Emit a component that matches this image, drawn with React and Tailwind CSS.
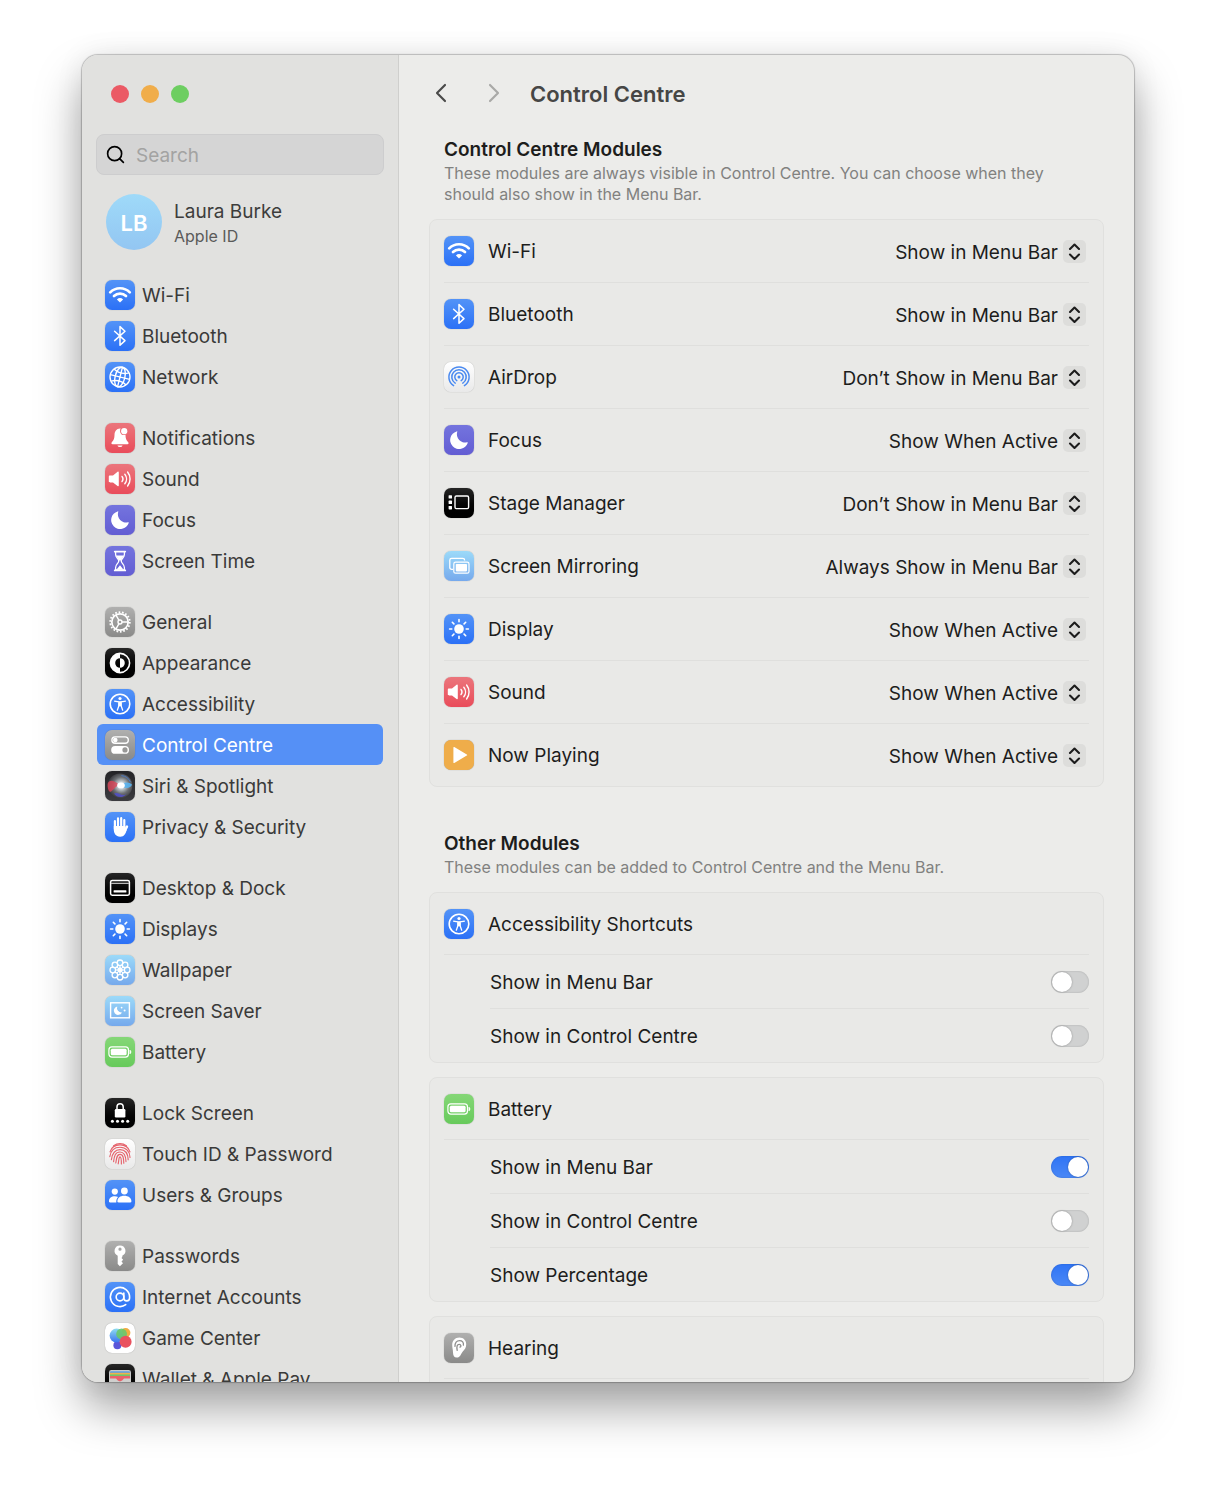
import React, { useState } from 'react'
import { AtSign, Search, ChevronLeft, ChevronRight } from 'lucide-react'

const tiles = {
  blue: 'bg-linear-to-b from-[#5393f7] to-[#2b70f6]',
  red: 'bg-linear-to-b from-[#eb757c] to-[#e94b5a]',
  purple: 'bg-linear-to-b from-[#7474de] to-[#635dd3]',
  gray: 'bg-linear-to-b from-[#b0b0af] to-[#8a8a89]',
  black: 'bg-linear-to-b from-[#262626] to-[#000000]',
  dark: 'bg-linear-to-b from-[#242427] to-[#3c3c40]',
  sky: 'bg-linear-to-b from-[#9cdaf9] to-[#76a9ec]',
  green: 'bg-linear-to-b from-[#85d777] to-[#67ca5b]',
  white: 'bg-linear-to-b from-[#ffffff] to-[#e9e9e9]',
  plain: 'bg-white',
  orange: 'bg-[#efad4a]',
}

// every glyph is drawn in a 30 x 30 box, the size of its tile
const glyphs = {
  wifi: (
    <>
      <g fill="none" stroke="#fff" strokeWidth="2.7">
        <path d="M5.2 12.4A13.6 13.6 0 0 1 24.8 12.4" strokeLinecap="round" />
        <path d="M9 16A8.6 8.6 0 0 1 21 16" strokeLinecap="round" />
      </g>
      <path d="M15 22.6 11.9 19.4A4.5 4.5 0 0 1 18.1 19.4Z" fill="#fff" />
    </>
  ),
  bluetooth: (
    <path d="M9.6 10.2 20 19.6 15 24.2V5.6L20 10.2 9.6 19.6" fill="none" stroke="#fff" strokeWidth="1.5" strokeLinejoin="round" strokeLinecap="round" />
  ),
  globe: (
    <g fill="none" stroke="#fff" strokeWidth="1.4">
      <circle cx="15" cy="15" r="10" />
      <g transform="rotate(14 15 15)">
        <ellipse cx="15" cy="15" rx="4.9" ry="10" />
        <path d="M15 5V25M5 15H25" />
        <path d="M7.2 8.8Q15 13 22.8 8.8M7.2 21.2Q15 17 22.8 21.2" />
      </g>
    </g>
  ),
  bell: (
    <>
      <path d="M15 5.4C11.4 5.6 9.6 8.3 9.5 12 9.4 15.6 8.9 16.8 7 18.9 6 20 6.3 21.2 7.6 21.2H22.4C23.7 21.2 24 20 23 18.9 21.1 16.8 20.6 15.6 20.5 12A4.6 4.6 0 0 1 15.6 5.4Z" fill="#fff" />
      <circle cx="19.2" cy="8.2" r="3.9" fill="#eb6f77" />
      <circle cx="19.2" cy="8.2" r="3.1" fill="#fff" />
      <path d="M12.4 22.4H17.6A2.7 2.3 0 0 1 12.4 22.4Z" fill="#fff" />
    </>
  ),
  sound: (
    <>
      <path d="M5 11.6H8L12.6 7.8C13.2 7.3 13.8 7.6 13.8 8.4V21.4C13.8 22.2 13.2 22.5 12.6 22L8 18.4H5C4.2 18.4 3.8 18 3.8 17.2V12.8C3.8 12 4.2 11.6 5 11.6Z" fill="#fff" />
      <g fill="none" stroke="#fff" strokeWidth="1.4" strokeLinecap="round">
        <path d="M17 12.4A4.2 4.2 0 0 1 17 17.6" />
        <path d="M19.8 10.2A7.6 7.6 0 0 1 19.8 19.8" />
        <path d="M22.6 8A11.2 11.2 0 0 1 22.6 22" />
      </g>
    </>
  ),
  moon: <path d="M12.6 6.4A9 9 0 1 0 23.7 17.9C23.9 17.3 23.4 17 22.9 17.3A8.2 8.2 0 0 1 13.2 7.1C13.4 6.5 13.2 6.1 12.6 6.4Z" fill="#fff" />,
  hourglass: (
    <>
      <path d="M9.7 5.6H20.3M9.7 24.4H20.3" stroke="#fff" strokeWidth="1.7" strokeLinecap="round" />
      <path d="M10.6 6V8.6C10.6 11.4 13.8 13 13.8 15 13.8 17 10.6 18.6 10.6 21.4V24H19.4V21.4C19.4 18.6 16.2 17 16.2 15 16.2 13 19.4 11.4 19.4 8.6V6" fill="none" stroke="#fff" strokeWidth="1.3" />
      <path d="M11 9.6H19C18.2 11.6 16.4 12.8 16 14.6H14C13.6 12.8 11.8 11.6 11 9.6ZM11.6 23.6 15 19.2 18.4 23.6Z" fill="#fff" />
    </>
  ),
  gear: (
    <g fill="none" stroke="#fff">
      <circle cx="15" cy="15" r="9.8" strokeWidth="1.8" strokeDasharray="1.7 1.72" />
      <circle cx="15" cy="15" r="8.2" strokeWidth="1.7" />
      <circle cx="15" cy="15" r="2" strokeWidth="1.4" />
      <path d="M17 15H23M14 13.3 11 8.1M14 16.7 11 21.9" strokeWidth="1.4" />
    </g>
  ),
  appearance: (
    <>
      <circle cx="15" cy="15" r="9.6" fill="none" stroke="#fff" strokeWidth="1.6" />
      <path d="M15 5.4A9.6 9.6 0 0 0 15 24.6V19.8A4.8 4.8 0 0 1 15 10.2ZM15 10.2A4.8 4.8 0 0 1 15 19.8Z" fill="#fff" />
    </>
  ),
  accessibility: (
    <>
      <circle cx="15" cy="15" r="9.8" fill="none" stroke="#fff" strokeWidth="1.6" />
      <circle cx="15" cy="9.5" r="1.6" fill="#fff" />
      <path d="M9.6 12.2C11.4 12.7 13 12.9 15 12.9S18.6 12.7 20.4 12.2M12.3 21.2 13.8 17V13.2H16.2V17L17.7 21.2" fill="none" stroke="#fff" strokeWidth="1.3" strokeLinecap="round" strokeLinejoin="round" />
      <path d="M13.6 13H16.4V17.2H13.6Z" fill="#fff" />
    </>
  ),
  switches: (
    <>
      <rect x="6.9" y="6.9" width="16.4" height="6.4" rx="3.2" fill="none" stroke="#fff" strokeWidth="1.4" />
      <circle cx="10.3" cy="10.1" r="2.3" fill="#fff" />
      <rect x="6.2" y="16" width="17.8" height="7.8" rx="3.9" fill="#fff" />
      <circle cx="20" cy="19.9" r="2.6" fill="#989897" />
    </>
  ),
  siri: (
    <>
      <defs>
        <radialGradient id="siriOrb" cx="0.55" cy="0.48" r="0.55">
          <stop offset="0" stopColor="#ffffff" />
          <stop offset="0.25" stopColor="#c9d3d8" />
          <stop offset="0.6" stopColor="#6d7074" />
          <stop offset="1" stopColor="#343438" />
        </radialGradient>
      </defs>
      <circle cx="15" cy="14.8" r="12.4" fill="url(#siriOrb)" />
      <path d="M2.6 13C4 8.6 8 8.6 14.5 14 9 16 7 21.4 4.8 20.8 3 19.4 2.4 16 2.6 13Z" fill="#dc4557" opacity="0.8" />
      <path d="M14.5 14.6C19 10.6 24 10.6 27 13.6 26 17.6 20 18.4 14.5 14.6Z" fill="#58b2ef" opacity="0.9" />
      <path d="M9 22.6C13 20 17 26.4 21.8 23 18 27 12 27.4 9 22.6Z" fill="#514fc9" opacity="0.85" />
      <path d="M16.4 4.6A11 11 0 0 1 25.4 11" fill="none" stroke="#4d7cc4" strokeWidth="1" />
      <ellipse cx="16" cy="14.4" rx="3.8" ry="2.8" fill="#fff" />
    </>
  ),
  hand: (
    <>
      <g stroke="#fff" strokeWidth="2.2" strokeLinecap="round" fill="none">
        <path d="M9.9 9.2V17M13 6.4V16M16.2 6.2V16M19.3 8.2V17" />
        <path d="M22 14.6 19.4 19.6" strokeWidth="2.4" />
      </g>
      <path d="M8.8 14H20.4V17.4L21.8 17.8C20.8 21.4 19.4 24.8 15.2 24.8 10.6 24.8 8.8 21.2 8.8 17.6Z" fill="#fff" />
    </>
  ),
  dock: (
    <>
      <rect x="5.6" y="7.4" width="18.8" height="14.8" rx="1.6" fill="none" stroke="#fff" strokeWidth="1.5" />
      <path d="M6 10.4H24" stroke="#bbb" strokeWidth="1.2" />
      <rect x="8.6" y="17.2" width="12.8" height="2.4" rx="0.6" fill="#fff" />
    </>
  ),
  sun: (
    <>
      <circle cx="15" cy="15" r="4.8" fill="#fff" />
      <path d="M15 5.6V7.8M15 22.2V24.4M5.6 15H7.8M22.2 15H24.4M8.3 8.3 9.9 9.9M20.1 20.1 21.7 21.7M8.3 21.7 9.9 20.1M20.1 9.9 21.7 8.3" stroke="#fff" strokeWidth="1.6" strokeLinecap="round" />
    </>
  ),
  flower: (
    <g fill="none" stroke="#fff" strokeWidth="1.3">
      <circle cx="15" cy="7.8" r="2.8" />
      <circle cx="20.1" cy="9.9" r="2.8" />
      <circle cx="22.2" cy="15" r="2.8" />
      <circle cx="20.1" cy="20.1" r="2.8" />
      <circle cx="15" cy="22.2" r="2.8" />
      <circle cx="9.9" cy="20.1" r="2.8" />
      <circle cx="7.8" cy="15" r="2.8" />
      <circle cx="9.9" cy="9.9" r="2.8" />
      <circle cx="15" cy="15" r="2" fill="#fff" />
      <path d="M15 10.6V19.4M10.6 15H19.4M11.9 11.9 18.1 18.1M11.9 18.1 18.1 11.9" strokeWidth="1" />
    </g>
  ),
  saver: (
    <>
      <rect x="5.6" y="6.8" width="18.8" height="15" fill="none" stroke="#fff" strokeWidth="1.4" />
      <path d="M12.2 10.4A4.3 4.3 0 1 0 17 16.4 4.6 4.6 0 0 1 12.2 10.4Z" fill="#fff" />
      <circle cx="16.6" cy="11.6" r="0.9" fill="#fff" />
      <circle cx="19.6" cy="14.6" r="1" fill="#fff" />
    </>
  ),
  battery: (
    <>
      <rect x="3.9" y="9.9" width="19.6" height="10.2" rx="3" fill="none" stroke="#fff" strokeWidth="1.2" />
      <rect x="5.8" y="11.7" width="15.8" height="6.6" rx="1.5" fill="#fff" />
      <path d="M25 13.2A2.4 2.4 0 0 1 25 16.8Z" fill="#fff" stroke="#fff" strokeWidth="0.8" />
    </>
  ),
  lock: (
    <>
      <rect x="9.8" y="11" width="10.6" height="8.4" rx="1.2" fill="#fff" />
      <path d="M12 11.6V8.8A3.1 3.1 0 0 1 18.2 8.8V11.6" fill="none" stroke="#fff" strokeWidth="1.5" />
      <g fill="#fff">
        <circle cx="7.4" cy="23.2" r="1.5" />
        <circle cx="12.5" cy="23.2" r="1.5" />
        <circle cx="17.6" cy="23.2" r="1.5" />
        <circle cx="22.7" cy="23.2" r="1.5" />
      </g>
    </>
  ),
  touch: (
    <g fill="none" stroke="#e5636c" strokeWidth="1.15" strokeLinecap="round">
      <path d="M8.6 6.8A10.6 10.6 0 0 1 21.4 6.8" />
      <path d="M5 12.8C6.4 8.4 10.4 5.8 15 5.8S23.6 8.4 25 12.8" />
      <path d="M4.8 17.6C5.6 12 9 8.2 15 8.2S25 12.6 25 18.4" />
      <path d="M6.4 20.6C7.2 14.4 9.4 10.6 15 10.6S23 14.8 23.2 20.8" />
      <path d="M8.6 22.6C9.2 17 10.2 13 15 13S20.8 17.4 21 22.6" />
      <path d="M10.8 24C11.6 19.4 11.6 15.4 15 15.4S18.6 19.4 18.8 24.2" />
      <path d="M13.2 24.8C14 21.6 13.6 17.8 15 17.8S16.4 21.4 16.4 25" />
    </g>
  ),
  users: (
    <g fill="#fff">
      <circle cx="9.8" cy="11.6" r="3.1" />
      <circle cx="19.4" cy="11" r="3.4" />
      <path d="M4 21.2C4 17.9 6.4 16.2 9.8 16.2 11 16.2 12.2 16.5 13.1 17 11.8 18.2 11.2 19.8 11.3 22.4H5C4.3 22.4 4 22 4 21.2Z" />
      <path d="M12.4 21.2C12.4 18 15.2 15.8 19.2 15.8S26.4 18 26.4 21.2C26.4 22 26.1 22.4 25.3 22.4H13.6C12.7 22.4 12.4 22 12.4 21.2Z" />
    </g>
  ),
  key: (
    <path
      d="M15 4.4A5.4 5.4 0 0 0 12.7 14.7V22.9L14.9 25.2 18 22.2 16.5 20.5 18.2 18.7 16.5 16.9 17.3 16V14.7A5.4 5.4 0 0 0 15 4.4ZM15 6.6A1.6 1.6 0 1 1 15 9.8 1.6 1.6 0 0 1 15 6.6Z"
      fill="#fff"
      fillRule="evenodd"
    />
  ),
  at: <AtSign x="3.5" y="3.5" width="23" height="23" color="#fff" strokeWidth={1.7} />,
  game: (
    <>
      <defs>
        <linearGradient id="gameBlue" x1="0" y1="0" x2="0" y2="1">
          <stop offset="0" stopColor="#8fdcf0" />
          <stop offset="1" stopColor="#3a72f0" />
        </linearGradient>
      </defs>
      <circle cx="20.6" cy="9.8" r="4.8" fill="#f0ad42" />
      <circle cx="12.4" cy="22.2" r="4" fill="#5a55d8" />
      <circle cx="11.6" cy="12.6" r="7" fill="url(#gameBlue)" />
      <circle cx="16.6" cy="11" r="5.4" fill="#69c86a" opacity="0.9" />
      <circle cx="20.6" cy="18.8" r="6" fill="#e9515e" />
    </>
  ),
  wallet: (
    <>
      <rect x="4" y="6" width="22" height="20" rx="2.4" fill="#c9c9c9" />
      <rect x="5" y="7.2" width="20" height="5" rx="1" fill="#5f9fe0" />
      <rect x="5" y="8.8" width="20" height="5" fill="#efb14c" />
      <rect x="5" y="10.4" width="20" height="5" fill="#6fc76a" />
      <path d="M5 12H25V20H5Z" fill="#e9616a" />
      <path d="M4 14.4H10.5C12 14.4 12.4 17.2 15 17.2S18 14.4 19.5 14.4H26V26H4Z" fill="#cfcfcd" />
    </>
  ),
  airdrop: (
    <g fill="none" stroke="#4a8af0" strokeWidth="1.5" strokeLinecap="round">
      <circle cx="15" cy="15" r="1.5" fill="#4a8af0" stroke="none" />
      <path d="M12.8 18.6A4.2 4.2 0 1 1 17.2 18.6" />
      <path d="M11.2 21.1A7.2 7.2 0 1 1 18.8 21.1" />
      <path d="M9.6 23.6A10.1 10.1 0 1 1 20.4 23.6" />
    </g>
  ),
  stage: (
    <>
      <g fill="#fff">
        <rect x="4.6" y="7.2" width="3.4" height="3.4" rx="0.6" />
        <rect x="4.6" y="12.6" width="3.4" height="3.4" rx="0.6" />
        <rect x="4.6" y="18" width="3.4" height="3.4" rx="0.6" />
      </g>
      <rect x="11" y="8" width="13.6" height="12.6" rx="1.4" fill="none" stroke="#fff" strokeWidth="1.4" />
    </>
  ),
  mirror: (
    <>
      <path d="M9 18.4H7.6C6.5 18.4 5.8 17.7 5.8 16.6V9.2C5.8 8.1 6.5 7.4 7.6 7.4H18.8C19.9 7.4 20.6 8.1 20.6 9.2V9.6" fill="none" stroke="#fff" strokeWidth="1.3" />
      <rect x="9.8" y="11.2" width="15.2" height="11" rx="1.8" fill="none" stroke="#fff" strokeWidth="1.2" />
      <rect x="11.8" y="13" width="11.2" height="7.4" rx="0.8" fill="#fff" />
    </>
  ),
  play: <path d="M9.4 7.6V22.4C9.4 23 9.8 23.2 10.3 22.9L22.8 15.6C23.3 15.3 23.3 14.7 22.8 14.4L10.3 7.1C9.8 6.8 9.4 7 9.4 7.6Z" fill="#fff" />,
  ear: (
    <>
      <path d="M15.4 4.6C11 4.6 8.2 7.8 8.2 12 8.2 15 9 16.6 9 19.6 9 22.6 10.2 24.6 12.6 24.6 16.6 24.6 16.6 20.8 18.8 18.4 20.6 16.4 22.2 14.6 22.2 11.4 22.2 7.4 19.4 4.6 15.4 4.6Z" fill="#fff" />
      <path d="M11 13.4C10.8 9.6 12.6 7.6 15.6 7.6 18.4 7.6 19.8 9.4 19.4 12.2M13.2 17.4C12.4 13 13.2 11.4 15.2 11.4 17.2 11.4 17.4 13.6 16 14.2" fill="none" stroke="#8f8f8e" strokeWidth="1.3" strokeLinecap="round" />
    </>
  ),
}

const sidebarGroups = [
  [
    { label: 'Wi-Fi', glyph: 'wifi', tile: 'blue' },
    { label: 'Bluetooth', glyph: 'bluetooth', tile: 'blue' },
    { label: 'Network', glyph: 'globe', tile: 'blue' },
  ],
  [
    { label: 'Notifications', glyph: 'bell', tile: 'red' },
    { label: 'Sound', glyph: 'sound', tile: 'red' },
    { label: 'Focus', glyph: 'moon', tile: 'purple' },
    { label: 'Screen Time', glyph: 'hourglass', tile: 'purple' },
  ],
  [
    { label: 'General', glyph: 'gear', tile: 'gray' },
    { label: 'Appearance', glyph: 'appearance', tile: 'black' },
    { label: 'Accessibility', glyph: 'accessibility', tile: 'blue' },
    { label: 'Control Centre', glyph: 'switches', tile: 'gray' },
    { label: 'Siri & Spotlight', glyph: 'siri', tile: 'dark' },
    { label: 'Privacy & Security', glyph: 'hand', tile: 'blue' },
  ],
  [
    { label: 'Desktop & Dock', glyph: 'dock', tile: 'black' },
    { label: 'Displays', glyph: 'sun', tile: 'blue' },
    { label: 'Wallpaper', glyph: 'flower', tile: 'sky' },
    { label: 'Screen Saver', glyph: 'saver', tile: 'sky' },
    { label: 'Battery', glyph: 'battery', tile: 'green' },
  ],
  [
    { label: 'Lock Screen', glyph: 'lock', tile: 'black' },
    { label: 'Touch ID & Password', glyph: 'touch', tile: 'white' },
    { label: 'Users & Groups', glyph: 'users', tile: 'blue' },
  ],
  [
    { label: 'Passwords', glyph: 'key', tile: 'gray' },
    { label: 'Internet Accounts', glyph: 'at', tile: 'blue' },
    { label: 'Game Center', glyph: 'game', tile: 'plain' },
    { label: 'Wallet & Apple Pay', glyph: 'wallet', tile: 'black' },
  ],
]

const menuBar = ['Show in Menu Bar', 'Don’t Show in Menu Bar']
const whenActive = ['Always Show in Menu Bar', 'Show When Active', 'Don’t Show in Menu Bar']

const modules = [
  { label: 'Wi-Fi', glyph: 'wifi', tile: 'blue', options: menuBar, value: 'Show in Menu Bar' },
  { label: 'Bluetooth', glyph: 'bluetooth', tile: 'blue', options: menuBar, value: 'Show in Menu Bar' },
  { label: 'AirDrop', glyph: 'airdrop', tile: 'white', options: menuBar, value: 'Don’t Show in Menu Bar' },
  { label: 'Focus', glyph: 'moon', tile: 'purple', options: whenActive, value: 'Show When Active' },
  { label: 'Stage Manager', glyph: 'stage', tile: 'black', options: menuBar, value: 'Don’t Show in Menu Bar' },
  { label: 'Screen Mirroring', glyph: 'mirror', tile: 'sky', options: whenActive, value: 'Always Show in Menu Bar' },
  { label: 'Display', glyph: 'sun', tile: 'blue', options: whenActive, value: 'Show When Active' },
  { label: 'Sound', glyph: 'sound', tile: 'red', options: whenActive, value: 'Show When Active' },
  { label: 'Now Playing', glyph: 'play', tile: 'orange', options: whenActive, value: 'Show When Active' },
]

const otherModules = [
  {
    label: 'Accessibility Shortcuts',
    glyph: 'accessibility',
    tile: 'blue',
    toggles: [['Show in Menu Bar', false], ['Show in Control Centre', false]],
  },
  {
    label: 'Battery',
    glyph: 'battery',
    tile: 'green',
    toggles: [['Show in Menu Bar', true], ['Show in Control Centre', false], ['Show Percentage', true]],
  },
  { label: 'Hearing', glyph: 'ear', tile: 'gray', toggles: [] },
]

const Tile = ({ glyph, tile }) => (
  <span className={`block size-[30px] shrink-0 overflow-hidden rounded-[7px] shadow-[0_0_1px_rgba(0,0,0,0.35)] ${tiles[tile]}`}>
    <svg viewBox="0 0 30 30" className="size-full" aria-hidden="true">
      {glyphs[glyph]}
    </svg>
  </span>
)

const Sidebar = () => {
  const [active, setActive] = useState('Control Centre')

  return (
    <aside className="flex w-[317px] shrink-0 flex-col overflow-y-auto border-r border-[#cfcfcd] bg-[#e1e1df] px-3.5 pt-[30px] [scrollbar-width:none]">
      <div className="flex gap-3 pl-[15px]">
        <button aria-label="Close" className="size-[18px] rounded-full bg-[#eb5a65]" />
        <button aria-label="Minimise" className="size-[18px] rounded-full bg-[#f0ad4a]" />
        <button aria-label="Zoom" className="size-[18px] rounded-full bg-[#6dce61]" />
      </div>

      <label className="mt-[31px] flex h-[41px] shrink-0 items-center gap-2.5 rounded-lg border border-[#cdcdce] bg-[#d5d5d5] px-2">
        <Search className="size-[21px] shrink-0 text-black" strokeWidth={1.9} aria-hidden="true" />
        <input
          type="search"
          aria-label="Search"
          placeholder="Search"
          className="w-full min-w-0 bg-transparent pt-[3px] text-[19px] outline-none placeholder:text-[#a3a3a2]"
        />
      </label>

      <a href="#apple-id" className="mt-[19px] flex shrink-0 items-center gap-3 pl-2.5">
        <span className="flex size-14 items-center justify-center rounded-full bg-linear-to-b from-[#9fdaf9] to-[#93c6f2] pt-0.5 text-[22px] font-semibold text-white">
          LB
        </span>
        <span className="flex flex-col pt-[3px] text-[#3d3d3c]">
          <span className="text-[19px] leading-6">Laura Burke</span>
          <span className="text-base leading-6 text-[#5a5a59]">Apple ID</span>
        </span>
      </a>

      <nav className="mt-6 flex flex-col gap-5 px-px">
        {sidebarGroups.map((group, index) => (
          <ul key={index}>
            {group.map((item) => (
              <li key={item.label}>
                <a
                  href={`#${item.glyph}`}
                  onClick={() => setActive(item.label)}
                  className={`flex h-[41px] items-center gap-[7px] rounded-md pl-2 text-[19px] ${
                    active === item.label ? 'bg-[#5590f6] text-white' : 'text-[#3a3a39]'
                  }`}
                >
                  <Tile glyph={item.glyph} tile={item.tile} />
                  <span className="pt-[3px]">{item.label}</span>
                </a>
              </li>
            ))}
          </ul>
        ))}
      </nav>
    </aside>
  )
}

const ModuleRow = ({ label, glyph, tile, options, value }) => {
  const id = `module-${label}`

  return (
    <div className="flex h-[63px] items-center border-b border-[#dfdfdd] last:h-[62px] last:border-b-0">
      <Tile glyph={glyph} tile={tile} />
      <label htmlFor={id} className="ml-3.5 grow pt-[3px]">
        {label}
      </label>
      <div className="relative mr-[3px]">
        <select
          id={id}
          defaultValue={value}
          className="field-sizing-content block h-[31px] cursor-default appearance-none bg-transparent pt-[3px] pr-7 [text-align-last:right] outline-none"
        >
          {options.map((option) => (
            <option key={option}>{option}</option>
          ))}
        </select>
        <span className="pointer-events-none absolute top-1 right-0 size-[23px] rounded-[5px] bg-[#dddddb]">
          <svg viewBox="0 0 23 23" className="size-full" aria-hidden="true">
            <path d="M7 9 11.5 4.6 16 9M7 14.6 11.5 19 16 14.6" fill="none" stroke="#1c1c1c" strokeWidth="2.1" strokeLinecap="round" strokeLinejoin="round" />
          </svg>
        </span>
      </div>
    </div>
  )
}

const ToggleRow = ({ id, label, on }) => (
  <div className="ml-[46px] flex h-[54px] items-center justify-between border-b border-[#dfdfdd] last:h-[53px] last:border-b-0">
    <label htmlFor={id} className="pt-[3px]">
      {label}
    </label>
    <input
      id={id}
      type="checkbox"
      role="switch"
      defaultChecked={on}
      className="h-[22px] w-[38px] appearance-none rounded-full bg-[#d0d1d1] p-px shadow-[inset_0_0_2px_rgba(0,0,0,0.2)] before:block before:size-5 before:rounded-full before:bg-white before:shadow-[0_0_2px_rgba(0,0,0,0.35)] checked:bg-linear-to-b checked:from-[#2f74f5] checked:to-[#4a88f6] checked:before:translate-x-4"
    />
  </div>
)

const Card = ({ children }) => (
  <div className="min-h-20 rounded-lg border border-[#e0e0de] bg-[#e9e9e7] px-3.5">{children}</div>
)

const SectionTitle = ({ title, children }) => (
  <header className="mb-3.5 px-[15px]">
    <h2 className="text-[19px] leading-[26px] font-semibold">{title}</h2>
    <p className="text-base leading-[21px] text-[#81817f]">{children}</p>
  </header>
)

export default function App() {
  return (
    <div className="flex h-screen bg-white px-[82px] pt-[55px] pb-[109px] font-['Inter',sans-serif]">
      <div className="flex min-w-0 grow overflow-hidden rounded-2xl bg-[#ececea] shadow-[0_0_1px_1px_rgba(0,0,0,0.22),0_26px_46px_rgba(0,0,0,0.36),0_0_30px_rgba(0,0,0,0.07)]">
        <Sidebar />
        <main className="min-w-0 grow overflow-y-auto px-[30px] text-[19px] text-[#1d1d1c] [scrollbar-width:none]">
          <div className="flex h-[76px] items-center">
            <button aria-label="Back" className="-ml-1 text-[#4a4a49]">
              <ChevronLeft className="size-8" strokeWidth={1.6} />
            </button>
            <button aria-label="Forward" className="ml-[21px] text-[#a9a9a7]">
              <ChevronRight className="size-8" strokeWidth={1.6} />
            </button>
            <h1 className="ml-5 pt-0.5 text-[22px] font-semibold text-[#464645]">Control Centre</h1>
          </div>

          <section className="pt-1.5">
            <SectionTitle title="Control Centre Modules">
              These modules are always visible in Control Centre. You can choose when they should also show in the Menu Bar.
            </SectionTitle>
            <Card>
              {modules.map((item) => (
                <ModuleRow key={item.label} {...item} />
              ))}
            </Card>
          </section>

          <section className="mt-11">
            <SectionTitle title="Other Modules">These modules can be added to Control Centre and the Menu Bar.</SectionTitle>
            <div className="flex flex-col gap-3.5">
              {otherModules.map((item) => (
                <Card key={item.label}>
                  <div className="flex h-[62px] items-center gap-3.5 border-b border-[#dfdfdd]">
                    <Tile glyph={item.glyph} tile={item.tile} />
                    <h3 className="pt-[3px]">{item.label}</h3>
                  </div>
                  {item.toggles.map(([label, on]) => (
                    <ToggleRow key={label} id={`${item.glyph}-${label}`} label={label} on={on} />
                  ))}
                </Card>
              ))}
            </div>
          </section>
        </main>
      </div>
    </div>
  )
}
